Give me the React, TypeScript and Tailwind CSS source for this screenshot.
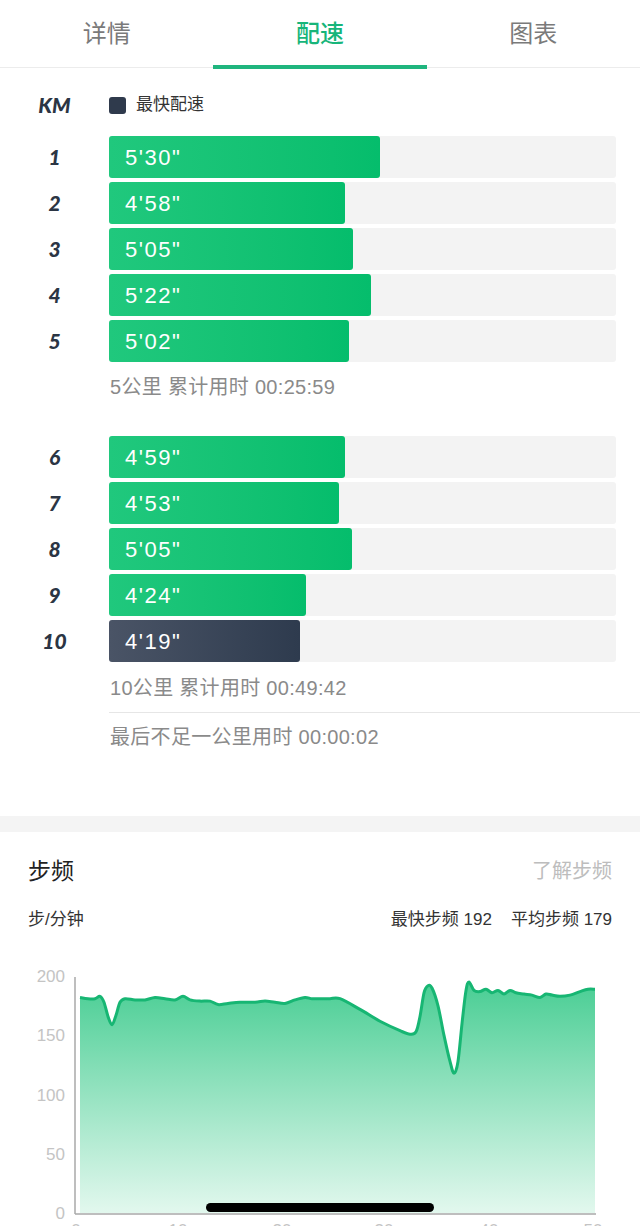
type Split = { km: number; pace: string; width: number; fastest?: boolean };

const groupOne: Split[] = [
  { km: 1, pace: `5'30"`, width: 271 },
  { km: 2, pace: `4'58"`, width: 236 },
  { km: 3, pace: `5'05"`, width: 244 },
  { km: 4, pace: `5'22"`, width: 262 },
  { km: 5, pace: `5'02"`, width: 240 },
];

const groupTwo: Split[] = [
  { km: 6, pace: `4'59"`, width: 236 },
  { km: 7, pace: `4'53"`, width: 230 },
  { km: 8, pace: `5'05"`, width: 243 },
  { km: 9, pace: `4'24"`, width: 197 },
  { km: 10, pace: `4'19"`, width: 191, fastest: true },
];

// cadence samples as [x px, steps/min]
const cadence: [number, number][] = [
  [80, 182], [88, 181], [95, 181], [100, 183], [104, 178], [108, 166], [112, 159], [116, 167],
  [120, 178], [125, 181], [135, 180], [145, 180], [155, 182], [165, 181], [175, 180], [183, 183],
  [190, 180], [200, 179], [210, 179], [218, 176], [228, 177], [240, 178], [255, 178], [265, 179],
  [275, 178], [285, 177], [295, 180], [305, 182], [312, 181], [320, 181], [330, 181], [340, 181],
  [360, 172], [380, 162], [400, 154], [410, 151], [416, 153], [420, 166], [424, 186], [428, 192],
  [432, 190], [438, 175], [444, 150], [450, 128], [454, 118], [458, 128], [462, 160], [466, 188],
  [469, 195], [474, 188], [480, 187], [486, 189], [492, 186], [498, 188], [504, 185], [510, 188],
  [516, 186], [524, 185], [532, 184], [540, 182], [546, 185], [552, 184], [560, 183], [570, 184],
  [580, 187], [588, 189], [595, 189],
];

function toY(v: number) {
  return 273 - v * 1.184;
}

function smoothPath(pts: [number, number][]) {
  const p = pts.map(([x, v]) => [x, toY(v)] as [number, number]);
  let d = `M${p[0][0]},${p[0][1].toFixed(1)}`;
  for (let i = 0; i < p.length - 1; i++) {
    const p0 = p[i - 1] || p[i];
    const p1 = p[i];
    const p2 = p[i + 1];
    const p3 = p[i + 2] || p2;
    const c1x = p1[0] + (p2[0] - p0[0]) / 6;
    const c1y = p1[1] + (p2[1] - p0[1]) / 6;
    const c2x = p2[0] - (p3[0] - p1[0]) / 6;
    const c2y = p2[1] - (p3[1] - p1[1]) / 6;
    d += ` C${c1x.toFixed(1)},${c1y.toFixed(1)} ${c2x.toFixed(1)},${c2y.toFixed(1)} ${p2[0]},${p2[1].toFixed(1)}`;
  }
  return d;
}

function Tabs() {
  const tabs = ["详情", "配速", "图表"];
  return (
    <div className="flex h-[68px] border-b border-[#ececec]">
      {tabs.map((t, i) => (
        <div key={t} className="relative flex flex-1 items-center justify-center">
          <span className={i === 1 ? "text-[24px] font-medium text-[#17b57a]" : "text-[24px] text-[#7a7a7a]"}>{t}</span>
          {i === 1 && <div className="absolute bottom-[-2px] left-0 right-0 h-[4px] bg-[#1fb57e]" />}
        </div>
      ))}
    </div>
  );
}

function SplitRows({ rows }: { rows: Split[] }) {
  return (
    <div className="flex flex-col gap-[4px]">
      {rows.map((r) => (
        <div key={r.km} className="flex h-[42px] items-center">
          <div className="w-[109px] text-center font-['Lato',sans-serif] text-[21px] font-black italic text-[#2b3544]">
            {r.km}
          </div>
          <div className="flex h-full flex-1 rounded-[3px] bg-[#f3f3f3]">
            <div
              className={
                r.fastest
                  ? "flex h-full items-center rounded-[3px] bg-gradient-to-r from-[#4a5466] to-[#2e3b4e] pl-[16px]"
                  : "flex h-full items-center rounded-[3px] bg-gradient-to-r from-[#20c87d] to-[#05bd6c] pl-[16px]"
              }
              style={{ width: r.width }}
            >
              <span className="text-[22px] tracking-[1.5px] text-white">{r.pace}</span>
            </div>
          </div>
        </div>
      ))}
    </div>
  );
}

function CadenceChart() {
  const line = smoothPath(cadence);
  const area = `${line} L595,273 L80,273 Z`;
  const yTicks = [200, 150, 100, 50, 0];
  const xTicks: [number, string][] = [
    [76, "0"], [178, "10"], [282, "20"], [384, "30"], [489, "40"], [593, "50"],
  ];
  return (
    <svg width="640" height="300" viewBox="0 0 640 300" className="block">
      <defs>
        <linearGradient id="cad" x1="0" y1="0" x2="0" y2="1">
          <stop offset="0%" stopColor="#3fcb8e" stopOpacity="0.95" />
          <stop offset="100%" stopColor="#dff7ec" stopOpacity="0.9" />
        </linearGradient>
      </defs>
      {yTicks.map((v) => (
        <text
          key={v}
          x="65"
          y={toY(v) + 6}
          textAnchor="end"
          fontSize="17"
          fill="#c4c4c4"
          fontFamily="Liberation Sans, sans-serif"
        >
          {v}
        </text>
      ))}
      <path d={area} fill="url(#cad)" />
      <path d={line} fill="none" stroke="#17b673" strokeWidth="3" strokeLinejoin="round" />
      <line x1="75" y1="37" x2="75" y2="274" stroke="#a8a8a8" strokeWidth="1.5" />
      <line x1="75" y1="274" x2="596" y2="274" stroke="#a8a8a8" strokeWidth="1.5" />
      {xTicks.map(([x, t]) => (
        <text key={t} x={x} y="296" textAnchor="middle" fontSize="17" fill="#c4c4c4" fontFamily="Liberation Sans, sans-serif">
          {t}
        </text>
      ))}
    </svg>
  );
}

export default function App() {
  return (
    <div className="relative w-[640px] bg-white font-['Liberation_Sans','Noto_Sans_CJK_SC',sans-serif]">
      <Tabs />

      <div className="pr-[24px]">
        <div className="mt-[23px] flex h-[28px] items-center">
          <div className="w-[109px] text-center font-['Lato',sans-serif] text-[21px] font-black italic text-[#2b3544]">
            KM
          </div>
          <div className="h-[17px] w-[17px] rounded-[3px] bg-[#2f3a4c]" />
          <span className="ml-[10px] text-[17px] text-[#333]">最快配速</span>
        </div>

        <div className="mt-[17px]">
          <SplitRows rows={groupOne} />
        </div>
        <div className="mt-[13px] pl-[110px] text-[20px] leading-[24px] tracking-[0.3px] text-[#8a8a8a]">
          5公里 累计用时 00:25:59
        </div>

        <div className="mt-[37px]">
          <SplitRows rows={groupTwo} />
        </div>
        <div className="mt-[14px] pl-[110px] text-[20px] leading-[24px] tracking-[0.3px] text-[#8a8a8a]">
          10公里 累计用时 00:49:42
        </div>
      </div>
      <div className="ml-[109px] mt-[12px] border-t border-[#e6e6e6]" />
      <div className="mt-[12px] pl-[110px] text-[20px] leading-[24px] tracking-[0.3px] text-[#8a8a8a]">
        最后不足一公里用时 00:00:02
      </div>

      <div className="mt-[67px] h-[16px] bg-[#f4f4f4]" />

      <div className="px-[28px] pt-[25px]">
        <div className="flex h-[28px] items-center justify-between">
          <span className="text-[23px] text-[#222]">步频</span>
          <span className="text-[20px] text-[#bdbdbd]">了解步频</span>
        </div>
        <div className="mt-[23px] flex h-[24px] items-center justify-between text-[17px] text-[#333]">
          <span>步/分钟</span>
          <span className="flex gap-[19px]">
            <span>最快步频 192</span>
            <span>平均步频 179</span>
          </span>
        </div>
      </div>
      <div className="mt-[8px]">
        <CadenceChart />
      </div>

      <div className="fixed bottom-[14px] left-1/2 h-[9px] w-[228px] -translate-x-1/2 rounded-full bg-black" />
    </div>
  );
}
